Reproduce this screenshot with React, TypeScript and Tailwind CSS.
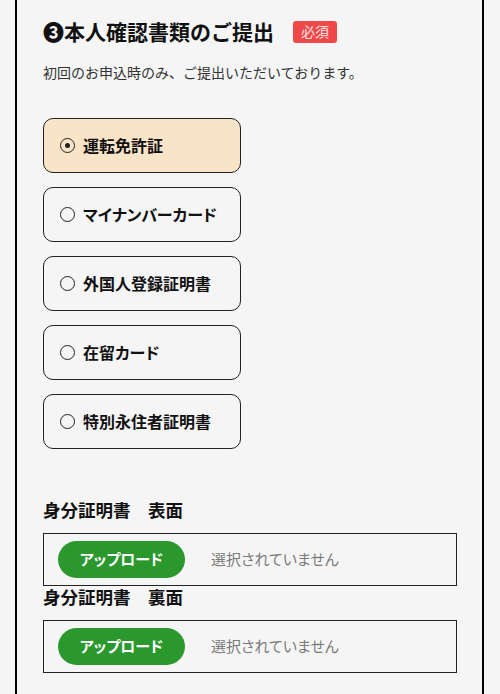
import { useState } from 'react';

const docTypes = ['運転免許証', 'マイナンバーカード', '外国人登録証明書', '在留カード', '特別永住者証明書'];

function UploadField({ label }: { label: string }) {
  return (
    <div>
      <p className="text-[17.5px] font-bold leading-[1.2] text-[#111] [font-feature-settings:'palt']">{label}</p>
      <div className="mt-[13px] flex h-[53px] w-[414px] items-center border-[1.5px] border-[#222] pl-[14px] [font-feature-settings:'palt']">
        <button className="flex h-[37px] w-[127px] items-center justify-center rounded-full bg-[#2b982e] text-[15px] font-bold text-white">
          アップロード
        </button>
        <span className="ml-[26px] text-[15px] text-[#7a7a7a]">選択されていません</span>
      </div>
    </div>
  );
}

export default function App() {
  const [selected, setSelected] = useState(0);

  return (
    <div
      className="min-h-[694px] bg-[#f5f5f5] pl-[15px] pr-[16px]"
      style={{ fontFamily: '"Noto Sans CJK JP", "Noto Sans", sans-serif' }}
    >
      <div className="min-h-[694px] border-x-2 border-black px-[26px] pt-[16px] pb-[20px]">
        <div className="flex items-center">
          <h2 className="text-[21px] font-bold leading-[1.5] text-[#111]">❸本人確認書類のご提出</h2>
          <span className="ml-[19px] flex h-[22px] items-center rounded-[3px] bg-[#f04848] px-[8px] text-[14px] text-[#fde3e3]">
            必須
          </span>
        </div>
        <p className="mt-[14px] text-[14px] leading-[1.5] text-[#333]">
          初回のお申込時のみ、ご提出いただいております。
        </p>

        <div className="mt-[35px] flex flex-col gap-[14px] [font-feature-settings:'palt']">
          {docTypes.map((name, i) => (
            <button
              key={name}
              onClick={() => setSelected(i)}
              className={`flex h-[55px] w-[198px] items-center rounded-[10px] border-[1.5px] border-[#222] pl-[16px] text-left ${
                selected === i ? 'bg-[#fae4c7]' : 'bg-[#f5f5f5]'
              }`}
            >
              <span className="flex h-[15px] w-[15px] items-center justify-center rounded-full border-[1.5px] border-[#222]">
                {selected === i && <span className="h-[5px] w-[5px] rounded-full bg-[#222]" />}
              </span>
              <span className="ml-[8px] text-[16px] font-bold text-[#111]">{name}</span>
            </button>
          ))}
        </div>

        <div className="mt-[50px]">
          <UploadField label="身分証明書　表面" />
        </div>
        <UploadField label="身分証明書　裏面" />
      </div>
    </div>
  );
}
